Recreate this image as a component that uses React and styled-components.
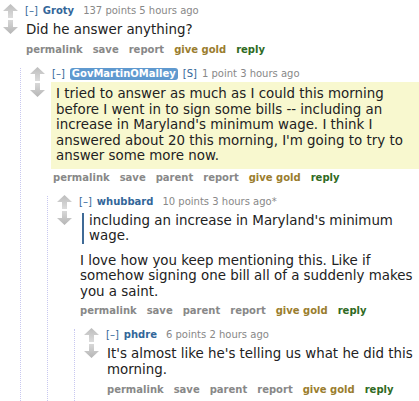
import React from "react";
import styled, { createGlobalStyle } from "styled-components";

const Global = createGlobalStyle`
  body {
    margin: 0;
    background: #ffffff;
    font-family: "DejaVu Sans", Verdana, sans-serif;
    color: #222;
  }
`;

const Page = styled.div`
  padding-top: 5px;
  width: 419px;
  height: 401px;
  overflow: hidden;
`;

const CommentBox = styled.div`
  display: flex;
  flex-direction: column;
  padding-left: ${(p) => p.$pad}px;
`;

const Row = styled.div`
  display: flex;
  align-items: flex-start;
`;

const Midcol = styled.div`
  width: 15px;
  flex: none;
  display: flex;
  flex-direction: column;
  gap: 2px;
  margin-top: -1px;
  margin-right: 7px;
`;

const Entry = styled.div`
  flex: 1;
  min-width: 0;
`;

const Tagline = styled.div`
  font-size: 10px;
  line-height: 12px;
  color: #888;
  display: flex;
  align-items: center;
  white-space: nowrap;
`;

const Expand = styled.span`
  color: #369;
  margin-right: 5px;
`;

const Author = styled.span`
  color: #369;
  font-weight: bold;
  margin-right: 9px;
`;

const OpAuthor = styled.span`
  color: #fff;
  background: #5f99cf;
  font-weight: bold;
  border-radius: 3px;
  padding: 0 2px;
  margin-right: 5px;
`;

const Flag = styled.span`
  color: #369;
  margin-right: 5px;
`;

const Body = styled.div`
  font-size: 13.4px;
  line-height: 16px;
  color: #222;
  margin: ${(p) => (p.$op ? "2px -80px 2px -1px" : "5px -80px 5px 0")};
  padding: ${(p) => (p.$op ? "4px 5px 5px" : "0 0 0 1px")};
  background: ${(p) => (p.$op ? "#f8f8cf" : "transparent")};

  & > * {
    max-width: ${(p) => p.$w}px;
  }
`;

const Para = styled.p`
  margin: 0;
  line-height: ${(p) => (p.$tight ? "15.5px" : "16px")};
`;

const Quote = styled.blockquote`
  margin: 0 0 9px 2px;
  padding-left: 5px;
  border-left: 2px solid #3f6a96;
  line-height: 15.5px;
`;

const Buttons = styled.ul`
  list-style: none;
  margin: 0;
  padding: 0 0 0 1px;
  display: flex;
  gap: 10px;
  font-size: 10px;
  font-weight: bold;
  line-height: 14px;
`;

const Btn = styled.li`
  color: ${(p) => (p.$kind === "gold" ? "#9a7d2e" : p.$kind === "reply" ? "#2f6a23" : "#888")};
`;

const Children = styled.div`
  margin-left: 17px;
  margin-top: 11px;
  border-left: 1px dotted #c8c8f0;
  padding-bottom: 30px;
`;

const Arrow = ({ down }) => (
  <svg width="15" height="14" viewBox="0 0 15 14">
    <defs>
      <linearGradient id={down ? "gd" : "gu"} x1="0" y1="0" x2="0" y2="1">
        <stop offset="0" stopColor={down ? "#d8d8d8" : "#bdbdbd"} />
        <stop offset="1" stopColor={down ? "#b5b5b5" : "#dcdcdc"} />
      </linearGradient>
    </defs>
    <path
      d={down ? "M5 0 H10 V7 H15 L7.5 14 L0 7 H5 Z" : "M7.5 0 L15 7 H10 V14 H5 V7 H0 Z"}
      fill={`url(#${down ? "gd" : "gu"})`}
    />
  </svg>
);

const Comment = ({ pad, author, op, points, time, w, children, replies, parent }) => (
  <CommentBox $pad={pad}>
    <Row>
      <Midcol>
        <Arrow />
        <Arrow down />
      </Midcol>
      <Entry>
        <Tagline>
          <Expand>[–]</Expand>
          {op ? (
            <>
              <OpAuthor>{author}</OpAuthor>
              <Flag>[S]</Flag>
            </>
          ) : (
            <Author>{author}</Author>
          )}
          {points} {time}
        </Tagline>
        <Body $op={op} $w={w}>
          {children}
        </Body>
        <Buttons>
          <Btn>permalink</Btn>
          <Btn>save</Btn>
          {parent && <Btn>parent</Btn>}
          <Btn>report</Btn>
          <Btn $kind="gold">give gold</Btn>
          <Btn $kind="reply">reply</Btn>
        </Buttons>
      </Entry>
    </Row>
    {replies && <Children>{replies}</Children>}
  </CommentBox>
);

export default function App() {
  return (
    <Page>
      <Global />
      <Comment
        pad={3}
        w={360}
        author="Groty"
        points="137 points"
        time="5 hours ago"
        replies={
          <Comment
            pad={9}
            w={360}
            op
            parent
            author="GovMartinOMalley"
            points="1 point"
            time="3 hours ago"
            replies={
              <Comment
                pad={9}
                w={340}
                parent
                author="whubbard"
                points="10 points"
                time="3 hours ago*"
                replies={
                  <Comment
                    pad={9}
                    w={340}
                    parent
                    author="phdre"
                    points="6 points"
                    time="2 hours ago"
                  >
                    <Para>It's almost like he's telling us what he did this morning.</Para>
                  </Comment>
                }
              >
                <Quote>including an increase in Maryland's minimum wage.</Quote>
                <Para $tight>
                  I love how you keep mentioning this. Like if somehow signing one bill all of a
                  suddenly makes you a saint.
                </Para>
              </Comment>
            }
          >
            <Para $tight>
              I tried to answer as much as I could this morning before I went in to sign some
              bills -- including an increase in Maryland's minimum wage. I think I answered about
              20 this morning, I'm going to try to answer some more now.
            </Para>
          </Comment>
        }
      >
        <Para>Did he answer anything?</Para>
      </Comment>
    </Page>
  );
}
